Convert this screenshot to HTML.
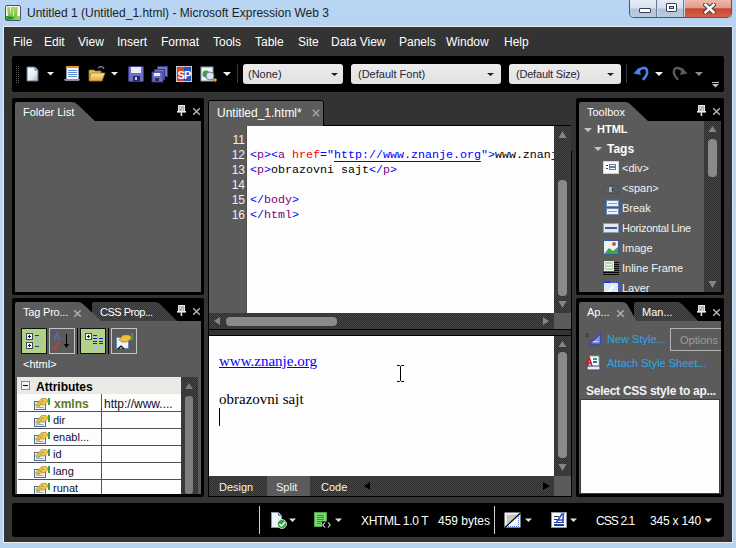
<!DOCTYPE html>
<html><head><meta charset="utf-8">
<style>
*{margin:0;padding:0;box-sizing:border-box}
html,body{width:736px;height:548px;overflow:hidden}
body{position:relative;background:linear-gradient(180deg,#b8d5f3 0px,#b6d4f2 30px,#bcd7f2 300px,#b6d3f0 548px);font-family:"Liberation Sans",sans-serif;font-size:11px;color:#fff}
.a{position:absolute}
.t{position:absolute;white-space:nowrap;line-height:1}
.blk{position:absolute;background:#000}
.gry{position:absolute;background:#5b5b5b}
</style></head><body>

<!-- title bar -->
<svg class="a" style="left:5px;top:5px" width="16" height="16" viewBox="0 0 16 16">
<defs><linearGradient id="ig" x1="0" y1="0" x2="0" y2="1"><stop offset="0" stop-color="#a8d870"/><stop offset="0.7" stop-color="#88c850"/><stop offset="1" stop-color="#60b040"/></linearGradient>
<linearGradient id="ig2" x1="0" y1="0" x2="1" y2="0"><stop offset="0" stop-color="#2a9a30"/><stop offset="0.5" stop-color="#60c040"/><stop offset="1" stop-color="#a0d860"/></linearGradient></defs>
<rect x="0.5" y="0.5" width="15" height="15" rx="1.5" fill="#fdfbe8" stroke="#4d5166"/>
<path d="M2 2h3l1 10h-3z M6 2h3l-1 9h-2z M9 2h4l-1 10h-3z" fill="url(#ig)"/>
<rect x="1" y="11" width="14" height="4" fill="url(#ig2)"/>
<rect x="3" y="12" width="5" height="1.5" fill="#1f7a20"/>
</svg>
<div class="t" style="left:27px;top:7px;font-size:12px;color:#1e1e1e">Untitled 1 (Untitled_1.html) - Microsoft Expression Web 3</div>

<!-- window buttons -->
<div class="a" style="left:629px;top:0;width:103px;height:18px;border:1px solid #505868;border-top:none;border-radius:0 0 5px 5px;overflow:hidden;background:#d0dced">
  <div class="a" style="left:0;top:0;width:27px;height:17px;background:linear-gradient(180deg,#e3ecf7 0,#d5e2f0 48%,#b2c4da 52%,#b9cbe0 100%);border-right:1px solid #6f7d92"></div>
  <div class="a" style="left:28px;top:0;width:26px;height:17px;background:linear-gradient(180deg,#e3ecf7 0,#d5e2f0 48%,#b2c4da 52%,#b9cbe0 100%);border-right:1px solid #6f7d92"></div>
  <div class="a" style="left:55px;top:0;width:47px;height:17px;background:linear-gradient(180deg,#f0b8ac 0,#e39c8c 45%,#c9462c 52%,#d36049 100%)"></div>
  <div class="a" style="left:9px;top:8px;width:12px;height:5px;background:#fff;border:1px solid #3d4250;border-radius:1px"></div>
  <div class="a" style="left:36px;top:3px;width:11px;height:9px;background:#fff;border:1px solid #3d4250;border-radius:1px"><div class="a" style="left:2px;top:2px;width:5px;height:3px;background:#b9cbe0;border:1px solid #3d4250"></div></div>
  <svg class="a" style="left:73px;top:3px" width="13" height="11" viewBox="0 0 13 11"><path d="M2.5 1.8L10.5 9.2M10.5 1.8L2.5 9.2" stroke="#4a3a3a" stroke-width="4.6" stroke-linecap="square"/><path d="M2.5 1.8L10.5 9.2M10.5 1.8L2.5 9.2" stroke="#fff" stroke-width="2.6" stroke-linecap="square"/></svg>
</div>

<!-- client -->
<div class="a" style="left:3px;top:26px;width:730px;height:517px;border:1px solid #e8eef6;border-right-color:#dde6f0"></div>
<div class="a" style="left:4px;top:27px;width:728px;height:515px;background:#333333"></div>

<!-- menu -->
<div class="t" style="left:13px;top:36px;font-size:12px">File</div>
<div class="t" style="left:44px;top:36px;font-size:12px">Edit</div>
<div class="t" style="left:78px;top:36px;font-size:12px">View</div>
<div class="t" style="left:117px;top:36px;font-size:12px">Insert</div>
<div class="t" style="left:161px;top:36px;font-size:12px">Format</div>
<div class="t" style="left:213px;top:36px;font-size:12px">Tools</div>
<div class="t" style="left:255px;top:36px;font-size:12px">Table</div>
<div class="t" style="left:298px;top:36px;font-size:12px">Site</div>
<div class="t" style="left:331px;top:36px;font-size:12px">Data View</div>
<div class="t" style="left:399px;top:36px;font-size:12px">Panels</div>
<div class="t" style="left:446px;top:36px;font-size:12px">Window</div>
<div class="t" style="left:504px;top:36px;font-size:12px">Help</div>

<!-- toolbar -->
<div class="blk" style="left:12px;top:56px;width:712px;height:36px;border-radius:2px"></div>
<svg class="a" style="left:12px;top:56px" width="712" height="36" viewBox="0 0 712 36">
<defs>
<pattern id="grip" width="2" height="2" patternUnits="userSpaceOnUse"><rect x="0" y="0" width="1" height="1" fill="#5a5a5a"/></pattern>
<linearGradient id="pg" x1="0" y1="0" x2="1" y2="1"><stop offset="0" stop-color="#ffffff"/><stop offset="0.6" stop-color="#e4ecf4"/><stop offset="1" stop-color="#9db2c8"/></linearGradient>
<linearGradient id="fold" x1="0" y1="0" x2="0" y2="1"><stop offset="0" stop-color="#f8e6a0"/><stop offset="1" stop-color="#e0a830"/></linearGradient>
<linearGradient id="dd" x1="0" y1="0" x2="0" y2="1"><stop offset="0" stop-color="#ececec"/><stop offset="1" stop-color="#e2e2e2"/></linearGradient>
</defs>
<rect x="4" y="9" width="4" height="18" fill="url(#grip)"/>
<!-- new page -->
<path d="M15 11h8l3 3v11h-11z" fill="url(#pg)" stroke="#5d7390" stroke-width="1"/>
<path d="M23 11v3h3" fill="#c8d8e8" stroke="#5d7390"/>
<path d="M35 16h7l-3.5 3.5z" fill="#f4f4f4"/>
<!-- notepad -->
<rect x="54.5" y="10.5" width="12" height="14" fill="#f6f8fc" stroke="#8a95a8"/>
<rect x="54" y="10" width="13" height="2" fill="#f0902a"/>
<path d="M56 14.5h9M56 16.5h9M56 18.5h9M56 20.5h9" stroke="#5f8ccc" stroke-width="1"/>
<path d="M52 23h16l-1 2h-14z" fill="#8a93a0"/>
<!-- folder -->
<path d="M77 14h5l1 1h6v9h-12z" fill="#e8c060" stroke="#8a7030" stroke-width="0.8"/>
<path d="M79 17h14l-3 8h-13z" fill="url(#fold)" stroke="#a07820" stroke-width="0.8"/>
<path d="M86 12c2-2 5-2 6 1" fill="none" stroke="#7f8fa8" stroke-width="1.2"/>
<path d="M99 16h7l-3.5 3.5z" fill="#f4f4f4"/>
<!-- save -->
<rect x="116.5" y="10.5" width="15" height="15" rx="1" fill="#6b6fc8" stroke="#3a3a80"/>
<rect x="119" y="11" width="10" height="6" fill="#e8ecf8"/>
<rect x="121" y="20" width="7" height="5" fill="#2a2a60"/>
<rect x="123" y="21" width="2" height="3" fill="#c8c8e8"/>
<!-- save all -->
<rect x="145.5" y="10.5" width="10" height="10" fill="#7478c8" stroke="#3a3a80"/>
<rect x="142.5" y="13.5" width="10" height="10" fill="#7478c8" stroke="#3a3a80"/>
<rect x="140" y="16" width="11" height="10" fill="#6b6fc8" stroke="#3a3a80"/>
<rect x="142" y="17" width="6" height="3" fill="#e8ecf8"/>
<rect x="143" y="22" width="4" height="3" fill="#2a2a60"/>
<!-- SP -->
<rect x="164.5" y="10.5" width="15" height="15" fill="#fff" stroke="#c8c8d8"/>
<rect x="165" y="11" width="7" height="14" fill="#e04020"/>
<rect x="172" y="11" width="7" height="14" fill="#2850b8"/>
<text x="165.5" y="23" font-family="Liberation Sans" font-weight="bold" font-size="11" fill="#fff">S</text>
<text x="172" y="23" font-family="Liberation Sans" font-weight="bold" font-size="11" fill="#fff">P</text>
<!-- preview -->
<rect x="189" y="11" width="12" height="14" fill="#eef3f8" stroke="#8898b0"/>
<circle cx="194" cy="18" r="3.5" fill="#3aa040"/>
<circle cx="198" cy="20" r="4" fill="#d8e4f0" stroke="#708090"/>
<circle cx="203" cy="24" r="1.8" fill="#f0a030"/>
<path d="M211 16h8l-4 4z" fill="#f0f0f0"/>
<rect x="225" y="8" width="1" height="19" fill="#3a3a3a"/>
<!-- dropdowns -->
<rect x="231" y="8" width="100" height="20" rx="3" fill="url(#dd)"/>
<path d="M319 17h7l-3.5 3z" fill="#202020"/>
<rect x="339" y="8" width="150" height="20" rx="3" fill="url(#dd)"/>
<path d="M475 17h7l-3.5 3z" fill="#202020"/>
<rect x="497" y="8" width="112" height="20" rx="3" fill="url(#dd)"/>
<path d="M595 17h7l-3.5 3z" fill="#202020"/>
<rect x="614" y="8" width="1" height="19" fill="#3a3a3a"/>
<!-- undo -->
<path d="M626.5 15C628.5 11.5 634 10.5 635 14.5C635.8 18 633.5 21 631.5 23" fill="none" stroke="#4a80ec" stroke-width="2.6" stroke-linecap="round"/>
<path d="M621.5 17.5L627 11.5L629 19z" fill="#4a80ec"/>
<path d="M643 16h8l-4 4z" fill="#f4f4f4"/>
<!-- redo gray -->
<g transform="translate(1297,0) scale(-1,1)">
<path d="M626.5 15C628.5 11.5 634 10.5 635 14.5C635.8 18 633.5 21 631.5 23" fill="none" stroke="#5a5a5a" stroke-width="2.4" stroke-linecap="round"/>
<path d="M621.5 17.5L627 11.5L629 19z" fill="#5a5a5a"/>
</g>
<path d="M683 16h8l-4 4z" fill="#8a8a8a"/>
<rect x="700" y="26" width="7" height="1" fill="#c0c0c0"/>
<path d="M700 28h7l-3.5 3.5z" fill="#c0c0c0"/>
</svg>
<div class="t" style="left:248px;top:69px;font-size:11px;color:#25253a">(None)</div>
<div class="t" style="left:358px;top:69px;font-size:11px;color:#25253a">(Default Font)</div>
<div class="t" style="left:516px;top:69px;font-size:11px;color:#25253a;letter-spacing:-0.2px">(Default Size)</div>

<!-- left top panel -->
<div class="blk" style="left:12px;top:98px;width:192px;height:197px;border-radius:2px"></div>
<svg class="a" style="left:12px;top:98px" width="192" height="24" viewBox="0 0 192 24"><path d="M3 24V6Q3 4 5 4H60Q63 4 65 6L84 24Z" fill="#5b5b5b"/></svg>
<div class="gry" style="left:15px;top:121px;width:186px;height:171px"></div>
<div class="t" style="left:23px;top:107px">Folder List</div>
<svg class="a" style="left:177px;top:105px" width="10" height="11" viewBox="0 0 10 11"><rect x="1.5" y="0.5" width="6" height="6" fill="#b4b4b4" stroke="#e8e8e8"/><rect x="3" y="2" width="1" height="1" fill="#f0f0f0"/><rect x="5" y="4" width="1" height="1" fill="#f0f0f0"/><rect x="0" y="6" width="9" height="1.6" fill="#f0f0f0"/><rect x="3.6" y="7" width="1.6" height="4" fill="#d8d8d8"/></svg>
<svg class="a" style="left:192px;top:107px" width="9" height="9" viewBox="0 0 9 9"><path d="M1.2 1.2L7.8 7.8M7.8 1.2L1.2 7.8" stroke="#b0b0b0" stroke-width="1.5"/></svg>

<!-- left bottom panel -->
<div class="blk" style="left:12px;top:298px;width:192px;height:199px;border-radius:2px"></div>
<svg class="a" style="left:12px;top:298px" width="192" height="24" viewBox="0 0 192 24">
<defs><pattern id="dth1" width="2" height="2" patternUnits="userSpaceOnUse"><rect width="2" height="2" fill="#343434"/><rect width="1" height="1" fill="#484848"/><rect x="1" y="1" width="1" height="1" fill="#484848"/></pattern></defs><path d="M80 24V6Q80 4 82 4H143Q146 4 148 6L166 24Z" fill="url(#dth1)"/>
<path d="M3 24V6Q3 4 5 4H66Q69 4 71 6L90 24Z" fill="#5b5b5b"/></svg>
<div class="gry" style="left:15px;top:321px;width:186px;height:173px"></div>
<div class="t" style="left:23px;top:307px;letter-spacing:-0.2px">Tag Pro...</div>
<svg class="a" style="left:73px;top:309px" width="9" height="9" viewBox="0 0 9 9"><path d="M1.2 1.2L7.8 7.8M7.8 1.2L1.2 7.8" stroke="#b0b0b0" stroke-width="1.5"/></svg>
<div class="t" style="left:100px;top:307px;letter-spacing:-0.5px">CSS Prop...</div>
<svg class="a" style="left:177px;top:305px" width="10" height="11" viewBox="0 0 10 11"><rect x="1.5" y="0.5" width="6" height="6" fill="#b4b4b4" stroke="#e8e8e8"/><rect x="3" y="2" width="1" height="1" fill="#f0f0f0"/><rect x="5" y="4" width="1" height="1" fill="#f0f0f0"/><rect x="0" y="6" width="9" height="1.6" fill="#f0f0f0"/><rect x="3.6" y="7" width="1.6" height="4" fill="#d8d8d8"/></svg>
<svg class="a" style="left:192px;top:307px" width="9" height="9" viewBox="0 0 9 9"><path d="M1.2 1.2L7.8 7.8M7.8 1.2L1.2 7.8" stroke="#b0b0b0" stroke-width="1.5"/></svg>

<!-- tag props content -->
<div class="a" style="left:21px;top:328px;width:26px;height:26px;background:#b2d387;border:1px solid #101010"></div>
<svg class="a" style="left:21px;top:328px" width="26" height="26" viewBox="0 0 26 26">
<rect x="5.5" y="5.5" width="6" height="6" fill="#f4f6fa" stroke="#404a60"/><path d="M7 8.5h3M8.5 7v3" stroke="#101830"/>
<rect x="5.5" y="14.5" width="6" height="6" fill="#f4f6fa" stroke="#404a60"/><path d="M7 17.5h3M8.5 16v3" stroke="#101830"/>
<rect x="14" y="7" width="4" height="1" fill="#304060"/><rect x="14" y="18" width="4" height="1" fill="#304060"/>
<rect x="14" y="8" width="4" height="10" fill="#a8c8a8"/><path d="M19 9.5h3M19 11.5h3M19 13.5h3M19 15.5h3M19 19.5h3" stroke="#a0b8e0"/>
</svg>
<div class="a" style="left:49px;top:328px;width:26px;height:26px;border:1px solid #c4c4c4"></div>
<svg class="a" style="left:49px;top:328px" width="26" height="26" viewBox="0 0 26 26">
<path d="M5 12l3-7 3 7M6 10h4" fill="none" stroke="#4a70c8" stroke-width="1.2"/>
<path d="M5 15h5l-5 6h5" fill="none" stroke="#c84030" stroke-width="1.2"/>
<path d="M17.5 6v12" stroke="#000" stroke-width="1"/><path d="M15 16l2.5 4 2.5-4z" fill="#000"/>
</svg>
<div class="a" style="left:77px;top:328px;width:1px;height:26px;background:#000"></div>
<div class="a" style="left:80px;top:328px;width:26px;height:26px;background:#b2d387;border:1px solid #101010"></div>
<svg class="a" style="left:80px;top:328px" width="26" height="26" viewBox="0 0 26 26">
<rect x="5.5" y="5.5" width="6" height="6" fill="#f4f6fa" stroke="#404a60"/><path d="M7 8.5h3M8.5 7v3" stroke="#101830"/>
<path d="M13 7.5h4M13 10.5h4M19 10.5h4M13 13.5h4M19 13.5h4M13 15.5h4M19 15.5h4" stroke="#1020e0"/>
<path d="M13 18.5h4M19 18.5h4M13 20.5h4" stroke="#a8c0e0"/>
</svg>
<div class="a" style="left:108px;top:328px;width:1px;height:26px;background:#000"></div>
<div class="a" style="left:111px;top:328px;width:26px;height:26px;border:1px solid #c4c4c4"></div>
<svg class="a" style="left:111px;top:328px" width="26" height="26" viewBox="0 0 26 26">
<rect x="5.5" y="9.5" width="12" height="11" fill="#f0f4fa" stroke="#6a88b0"/>
<path d="M7 21l3-3 3 3" fill="none" stroke="#000" stroke-width="1.2"/>
<path d="M8 12l4-5h6l2 2v2l-4 3h-5z" fill="#f2c040" stroke="#8a6a20" stroke-width="0.6"/>
<rect x="20" y="5" width="2" height="7" fill="#3aa040"/>
</svg>
<div class="t" style="left:23px;top:359px;font-size:11px">&lt;html&gt;</div>
<!-- table -->
<div class="a" style="left:15px;top:375px;width:186px;height:119px;background:#5b5b5b"></div>
<div class="a" style="left:17px;top:377px;width:164px;height:117px;background:#fdfdfd"></div>
<div class="a" style="left:17px;top:377px;width:164px;height:17px;background:#e9e9e6"></div>
<div class="a" style="left:21px;top:381px;width:9px;height:9px;border:1px solid #8a8a8a;background:#f4f4f4"></div>
<div class="a" style="left:23px;top:385px;width:5px;height:1px;background:#000"></div>
<div class="t" style="left:36px;top:381px;font-size:12px;font-weight:bold;color:#000">Attributes</div>
<div class="a" style="left:101px;top:394px;width:1px;height:100px;background:#505050"></div>
<div class="a" style="left:0;top:0;width:736px;height:494px;overflow:hidden"><svg class="a" style="left:33px;top:397px" width="18" height="14" viewBox="0 0 18 14"><rect x="1.5" y="4.5" width="11" height="8" fill="#f2f6fb" stroke="#4a6a9a"/><path d="M3 10.5h1.5M5.5 10.5h5" stroke="#8aa0c0"/><path d="M2.5 8L8.5 1.5H13Q15 2 14.5 5L11.5 8H7.5L5 10.5Z" fill="#f0c848" stroke="#9a7a30" stroke-width="0.6"/><path d="M4 8.5l1-1M6 6.5l1-1M8 4.5l1-1M5.5 9l1-1M7.5 7l1-1M9.5 5l1-1" stroke="#6a5a30" stroke-width="0.7"/><rect x="15" y="1" width="2" height="7" fill="#3aa040"/></svg><div class="t" style="left:54px;top:398px;font-size:12px;font-weight:bold;color:#5b7a23">xmlns</div><div class="t" style="left:104px;top:398px;font-size:12px;color:#101030">http://www....</div><div class="a" style="left:18px;top:411px;width:163px;height:1px;background:#505050"></div><svg class="a" style="left:33px;top:414px" width="18" height="14" viewBox="0 0 18 14"><rect x="1.5" y="4.5" width="11" height="8" fill="#f2f6fb" stroke="#4a6a9a"/><path d="M3 10.5h1.5M5.5 10.5h5" stroke="#8aa0c0"/><path d="M2.5 8L8.5 1.5H13Q15 2 14.5 5L11.5 8H7.5L5 10.5Z" fill="#f0c848" stroke="#9a7a30" stroke-width="0.6"/><path d="M4 8.5l1-1M6 6.5l1-1M8 4.5l1-1M5.5 9l1-1M7.5 7l1-1M9.5 5l1-1" stroke="#6a5a30" stroke-width="0.7"/><rect x="15" y="1" width="2" height="7" fill="#3aa040"/></svg><div class="t" style="left:53px;top:415px;font-size:11px;color:#101030">dir</div><div class="a" style="left:18px;top:428px;width:163px;height:1px;background:#505050"></div><svg class="a" style="left:33px;top:431px" width="18" height="14" viewBox="0 0 18 14"><rect x="1.5" y="4.5" width="11" height="8" fill="#f2f6fb" stroke="#4a6a9a"/><path d="M3 10.5h1.5M5.5 10.5h5" stroke="#8aa0c0"/><path d="M2.5 8L8.5 1.5H13Q15 2 14.5 5L11.5 8H7.5L5 10.5Z" fill="#f0c848" stroke="#9a7a30" stroke-width="0.6"/><path d="M4 8.5l1-1M6 6.5l1-1M8 4.5l1-1M5.5 9l1-1M7.5 7l1-1M9.5 5l1-1" stroke="#6a5a30" stroke-width="0.7"/><rect x="15" y="1" width="2" height="7" fill="#3aa040"/></svg><div class="t" style="left:53px;top:432px;font-size:11px;color:#101030">enabl...</div><div class="a" style="left:18px;top:445px;width:163px;height:1px;background:#505050"></div><svg class="a" style="left:33px;top:448px" width="18" height="14" viewBox="0 0 18 14"><rect x="1.5" y="4.5" width="11" height="8" fill="#f2f6fb" stroke="#4a6a9a"/><path d="M3 10.5h1.5M5.5 10.5h5" stroke="#8aa0c0"/><path d="M2.5 8L8.5 1.5H13Q15 2 14.5 5L11.5 8H7.5L5 10.5Z" fill="#f0c848" stroke="#9a7a30" stroke-width="0.6"/><path d="M4 8.5l1-1M6 6.5l1-1M8 4.5l1-1M5.5 9l1-1M7.5 7l1-1M9.5 5l1-1" stroke="#6a5a30" stroke-width="0.7"/><rect x="15" y="1" width="2" height="7" fill="#3aa040"/></svg><div class="t" style="left:53px;top:449px;font-size:11px;color:#101030">id</div><div class="a" style="left:18px;top:462px;width:163px;height:1px;background:#505050"></div><svg class="a" style="left:33px;top:465px" width="18" height="14" viewBox="0 0 18 14"><rect x="1.5" y="4.5" width="11" height="8" fill="#f2f6fb" stroke="#4a6a9a"/><path d="M3 10.5h1.5M5.5 10.5h5" stroke="#8aa0c0"/><path d="M2.5 8L8.5 1.5H13Q15 2 14.5 5L11.5 8H7.5L5 10.5Z" fill="#f0c848" stroke="#9a7a30" stroke-width="0.6"/><path d="M4 8.5l1-1M6 6.5l1-1M8 4.5l1-1M5.5 9l1-1M7.5 7l1-1M9.5 5l1-1" stroke="#6a5a30" stroke-width="0.7"/><rect x="15" y="1" width="2" height="7" fill="#3aa040"/></svg><div class="t" style="left:53px;top:466px;font-size:11px;color:#101030">lang</div><div class="a" style="left:18px;top:479px;width:163px;height:1px;background:#505050"></div><svg class="a" style="left:33px;top:482px" width="18" height="14" viewBox="0 0 18 14"><rect x="1.5" y="4.5" width="11" height="8" fill="#f2f6fb" stroke="#4a6a9a"/><path d="M3 10.5h1.5M5.5 10.5h5" stroke="#8aa0c0"/><path d="M2.5 8L8.5 1.5H13Q15 2 14.5 5L11.5 8H7.5L5 10.5Z" fill="#f0c848" stroke="#9a7a30" stroke-width="0.6"/><path d="M4 8.5l1-1M6 6.5l1-1M8 4.5l1-1M5.5 9l1-1M7.5 7l1-1M9.5 5l1-1" stroke="#6a5a30" stroke-width="0.7"/><rect x="15" y="1" width="2" height="7" fill="#3aa040"/></svg><div class="t" style="left:53px;top:483px;font-size:11px;color:#101030">runat</div></div>
<div class="a" style="left:181px;top:377px;width:17px;height:117px;background:repeating-conic-gradient(#303030 0 25%,#434343 0 50%) 0 0/2px 2px"></div>
<svg class="a" style="left:181px;top:377px" width="17" height="117" viewBox="0 0 17 117"><path d="M4 12h8l-4-6z" fill="#7a7a7a"/><rect x="4" y="19" width="8" height="98" rx="3" fill="#7e7e7e"/></svg>

<!-- center -->
<svg class="a" style="left:208px;top:100px" width="116" height="26" viewBox="0 0 116 26"><path d="M0.5 26V2.5Q0.5 0.5 2.5 0.5H113.5Q115.5 0.5 115.5 2.5V26" fill="#5b5b5b" stroke="#000"/></svg>
<div class="t" style="left:217px;top:107px;font-size:12px">Untitled_1.html*</div>
<svg class="a" style="left:312px;top:109px" width="8" height="8" viewBox="0 0 8 8"><path d="M0.8 0.8L7.2 7.2M7.2 0.8L0.8 7.2" stroke="#a8a8a8" stroke-width="1.3"/></svg>
<div class="blk" style="left:323px;top:125px;width:248px;height:1px"></div>
<div class="blk" style="left:208px;top:125px;width:1px;height:372px"></div>
<div class="blk" style="left:571px;top:151px;width:1px;height:346px"></div>
<div class="blk" style="left:208px;top:496px;width:364px;height:1px"></div>
<!-- gutter + code -->
<div class="gry" style="left:209px;top:126px;width:38px;height:187px"></div>
<div class="a" style="left:246px;top:126px;width:1px;height:187px;background:#4e4e4e"></div>
<div class="a" style="left:247px;top:126px;width:307px;height:187px;background:#fefefe;overflow:hidden">
<pre style="position:absolute;left:3px;top:7px;font-family:'Liberation Mono',monospace;font-size:11.67px;line-height:15px;color:#000">

<span style="color:#0000ff">&lt;</span><span style="color:#800080">p</span><span style="color:#0000ff">&gt;&lt;</span><span style="color:#800080">a</span> <span style="color:#ff0000">href</span><span style="color:#0000ff">="<u style="text-underline-offset:2.5px">http://www.znanje.org</u>"&gt;</span>www.znanje.org<span style="color:#0000ff">&lt;/</span><span style="color:#800080">a</span><span style="color:#0000ff">&gt;</span>
<span style="color:#0000ff">&lt;</span><span style="color:#800080">p</span><span style="color:#0000ff">&gt;</span>obrazovni sajt<span style="color:#0000ff">&lt;/</span><span style="color:#800080">p</span><span style="color:#0000ff">&gt;</span>

<span style="color:#0000ff">&lt;/</span><span style="color:#800080">body</span><span style="color:#0000ff">&gt;</span>
<span style="color:#0000ff">&lt;/</span><span style="color:#800080">html</span><span style="color:#0000ff">&gt;</span></pre>
</div>
<div class="t" style="left:226px;top:133px;font-size:12px;line-height:15px;text-align:right;width:19px;white-space:pre;color:#f0f0f0">11
12
13
14
15
16</div>
<!-- code v scroll -->
<div class="a" style="left:554px;top:126px;width:17px;height:187px;background:repeating-conic-gradient(#303030 0 25%,#434343 0 50%) 0 0/2px 2px"></div>
<svg class="a" style="left:554px;top:126px" width="17" height="187" viewBox="0 0 17 187"><path d="M4.5 12h8l-4-7z" fill="#858585"/><rect x="4" y="54" width="9" height="116" rx="4" fill="#8a8a8a"/><path d="M4.5 175h8l-4 7z" fill="#858585"/></svg>
<!-- code h scroll -->
<div class="a" style="left:209px;top:313px;width:345px;height:16px;background:repeating-conic-gradient(#303030 0 25%,#434343 0 50%) 0 0/2px 2px"></div>
<svg class="a" style="left:209px;top:313px" width="345" height="16" viewBox="0 0 345 16"><path d="M11 4v8l-6-4z" fill="#858585"/><rect x="17" y="4" width="111" height="9" rx="4" fill="#8a8a8a"/><path d="M334 4v8l6-4z" fill="#858585"/></svg>
<div class="gry" style="left:554px;top:313px;width:17px;height:16px"></div>
<div class="blk" style="left:209px;top:329px;width:362px;height:1px"></div>
<div class="a" style="left:209px;top:330px;width:362px;height:5px;background:#333"></div>
<div class="blk" style="left:209px;top:335px;width:362px;height:1px"></div>
<!-- design view -->
<div class="a" style="left:209px;top:336px;width:345px;height:140px;background:#fefefe"></div>
<div class="t" style="left:219px;top:354px;font-family:'Liberation Serif',serif;font-size:15px;color:#0000ff;text-decoration:underline">www.znanje.org</div>
<div class="t" style="left:219px;top:392px;font-family:'Liberation Serif',serif;font-size:15px;color:#000">obrazovni sajt</div>
<div class="blk" style="left:219px;top:408px;width:1px;height:18px"></div>
<svg class="a" style="left:396px;top:365px" width="9" height="17" viewBox="0 0 9 17"><path d="M1 0.5h2.5l1 1 1-1H8M4.5 1.5v14M1 16.5h2.5l1-1 1 1H8" fill="none" stroke="#000" stroke-width="1"/></svg>
<div class="a" style="left:554px;top:336px;width:17px;height:140px;background:repeating-conic-gradient(#303030 0 25%,#434343 0 50%) 0 0/2px 2px"></div>
<svg class="a" style="left:554px;top:336px" width="17" height="140" viewBox="0 0 17 140"><path d="M4.5 11h8l-4-6z" fill="#858585"/><rect x="4" y="16" width="9" height="106" rx="4" fill="#8a8a8a"/><path d="M4.5 128h8l-4 7z" fill="#858585"/></svg>
<!-- bottom tabs -->
<div class="a" style="left:209px;top:476px;width:345px;height:20px;background:repeating-conic-gradient(#303030 0 25%,#434343 0 50%) 0 0/2px 2px"></div>
<div class="gry" style="left:267px;top:476px;width:43px;height:20px"></div>
<div class="t" style="left:219px;top:482px;font-size:11px;color:#f4f4f4">Design</div>
<div class="t" style="left:276px;top:482px;font-size:11px;color:#f4f4f4">Split</div>
<div class="t" style="left:321px;top:482px;font-size:11px;color:#f4f4f4">Code</div>
<svg class="a" style="left:360px;top:480px" width="14" height="12" viewBox="0 0 14 12"><path d="M10 2v8l-6-4z" fill="#000"/></svg>
<svg class="a" style="left:540px;top:480px" width="14" height="12" viewBox="0 0 14 12"><path d="M3 2v8l7-4z" fill="#000"/></svg>
<div class="gry" style="left:554px;top:476px;width:17px;height:20px"></div>

<!-- right top panel -->
<div class="blk" style="left:576px;top:98px;width:148px;height:197px;border-radius:2px"></div>
<svg class="a" style="left:576px;top:98px" width="148" height="24" viewBox="0 0 148 24"><path d="M3 24V6Q3 4 5 4H49Q52 4 54 6L73 24Z" fill="#5b5b5b"/></svg>
<div class="gry" style="left:579px;top:121px;width:142px;height:171px;overflow:hidden">
</div>
<div class="t" style="left:587px;top:107px">Toolbox</div>
<svg class="a" style="left:697px;top:105px" width="10" height="11" viewBox="0 0 10 11"><rect x="1.5" y="0.5" width="6" height="6" fill="#b4b4b4" stroke="#e8e8e8"/><rect x="3" y="2" width="1" height="1" fill="#f0f0f0"/><rect x="5" y="4" width="1" height="1" fill="#f0f0f0"/><rect x="0" y="6" width="9" height="1.6" fill="#f0f0f0"/><rect x="3.6" y="7" width="1.6" height="4" fill="#d8d8d8"/></svg>
<svg class="a" style="left:712px;top:107px" width="9" height="9" viewBox="0 0 9 9"><path d="M1.2 1.2L7.8 7.8M7.8 1.2L1.2 7.8" stroke="#b0b0b0" stroke-width="1.5"/></svg>
<div class="a" style="left:579px;top:121px;width:125px;height:171px;overflow:hidden">
<svg class="a" style="left:5px;top:7px" width="8" height="5" viewBox="0 0 8 5"><path d="M0 0h8L4 4z" fill="#c4c4c4"/></svg>
<div class="t" style="left:18px;top:3px;font-size:11px;font-weight:bold">HTML</div>
<svg class="a" style="left:15px;top:26px" width="8" height="5" viewBox="0 0 8 5"><path d="M0 0h8L4 4z" fill="#c4c4c4"/></svg>
<div class="t" style="left:28px;top:22px;font-size:12px;font-weight:bold">Tags</div>
</div>
<div class="a" style="left:579px;top:121px;width:125px;height:171px;overflow:hidden"><div class="a" style="left:-579px;top:-121px;width:736px;height:548px">
<svg class="a" style="left:603px;top:161px" width="17" height="16" viewBox="0 0 17 16"><rect x="0.5" y="0.5" width="15" height="12" fill="#f8f8f8" stroke="#ffffff" stroke-dasharray="1 1"/><rect x="2" y="2" width="12" height="9" fill="#fff"/><path d="M3 4.5h2M3 7.5h2" stroke="#304060"/><rect x="6.5" y="3.5" width="6" height="2" fill="#fff" stroke="#5a80a8"/><rect x="6.5" y="6.5" width="6" height="2" fill="#fff" stroke="#5a80a8"/></svg><div class="t" style="left:622px;top:163px;font-size:11px;color:#f2f2f2">&lt;div&gt;</div><svg class="a" style="left:603px;top:181px" width="17" height="16" viewBox="0 0 17 16"><rect x="0.5" y="4.5" width="15" height="8" fill="none" stroke="#34507a" stroke-dasharray="2 1"/><rect x="6" y="6" width="3" height="5" fill="#a8b0c0"/><rect x="9" y="8" width="1" height="1" fill="#000"/></svg><div class="t" style="left:622px;top:183px;font-size:11px;color:#f2f2f2">&lt;span&gt;</div><svg class="a" style="left:603px;top:200px" width="17" height="16" viewBox="0 0 17 16"><rect x="3.5" y="0.5" width="12" height="6" fill="#eef4fa" stroke="#6a88b8"/><rect x="3.5" y="8.5" width="12" height="6" fill="#eef4fa" stroke="#6a88b8"/><path d="M5 3.5h9M5 11.5h9" stroke="#8aa0c8"/><path d="M0 5l3 3-3 3" fill="none" stroke="#3060d0"/></svg><div class="t" style="left:622px;top:203px;font-size:11px;color:#f2f2f2">Break</div><svg class="a" style="left:603px;top:220px" width="17" height="16" viewBox="0 0 17 16"><rect x="0.5" y="3.5" width="15" height="9" fill="#e0e8f0" stroke="#8a9ab0"/><rect x="2" y="7" width="12" height="2" fill="#405a90"/></svg><div class="t" style="left:622px;top:223px;font-size:11px;color:#f2f2f2;letter-spacing:-0.3px">Horizontal Line</div><svg class="a" style="left:603px;top:240px" width="17" height="16" viewBox="0 0 17 16"><rect x="0.5" y="0.5" width="15" height="14" fill="#e8f0f8" stroke="#3a5a90"/><path d="M1 14l5-6 4 3 5-4v7z" fill="#4aa040"/><circle cx="11" cy="4" r="2" fill="#e05030"/></svg><div class="t" style="left:622px;top:243px;font-size:11px;color:#f2f2f2">Image</div><svg class="a" style="left:603px;top:260px" width="17" height="16" viewBox="0 0 17 16"><path d="M11 2.5h5M11 4.5h5M11 6.5h5M11 8.5h5M11 10.5h5M0 12.5h16M0 14.5h16" stroke="#0a0a0a"/><rect x="1.5" y="1.5" width="9" height="9" fill="#b8d8b0" stroke="#e8f0e8"/><path d="M3 4.5h6M3 7.5h6" stroke="#f0f8f0"/></svg><div class="t" style="left:622px;top:263px;font-size:11px;color:#f2f2f2">Inline Frame</div><svg class="a" style="left:603px;top:280px" width="17" height="16" viewBox="0 0 17 16"><rect x="0.5" y="2.5" width="15" height="13" fill="#dce8f8" stroke="#1838e8" stroke-dasharray="2 1"/><rect x="1" y="1" width="6" height="2" fill="#1838e8"/><path d="M5 12l6-6" stroke="#fff" stroke-width="2"/></svg><div class="t" style="left:622px;top:283px;font-size:11px;color:#f2f2f2">Layer</div>
</div></div>
<div class="a" style="left:704px;top:121px;width:17px;height:171px;background:repeating-conic-gradient(#303030 0 25%,#434343 0 50%) 0 0/2px 2px"></div>
<svg class="a" style="left:704px;top:121px" width="17" height="171" viewBox="0 0 17 171"><path d="M4.5 11h8l-4-6z" fill="#858585"/><rect x="4" y="18" width="9" height="38" rx="4" fill="#8a8a8a"/><path d="M4.5 160h8l-4 7z" fill="#858585"/></svg>

<!-- right bottom panel -->
<div class="blk" style="left:576px;top:298px;width:148px;height:199px;border-radius:2px"></div>
<svg class="a" style="left:576px;top:298px" width="148" height="24" viewBox="0 0 148 24">
<defs><pattern id="dth2" width="2" height="2" patternUnits="userSpaceOnUse"><rect width="2" height="2" fill="#343434"/><rect width="1" height="1" fill="#484848"/><rect x="1" y="1" width="1" height="1" fill="#484848"/></pattern></defs><path d="M58 24V6Q58 4 60 4H101Q104 4 106 6L123 24Z" fill="url(#dth2)"/>
<path d="M3 24V6Q3 4 5 4H46Q49 4 51 6L61 24Z" fill="#5b5b5b"/></svg>
<div class="gry" style="left:579px;top:321px;width:142px;height:173px"></div>
<div class="t" style="left:587px;top:307px">Ap...</div>
<svg class="a" style="left:616px;top:309px" width="9" height="9" viewBox="0 0 9 9"><path d="M1.2 1.2L7.8 7.8M7.8 1.2L1.2 7.8" stroke="#b0b0b0" stroke-width="1.5"/></svg>
<div class="t" style="left:642px;top:307px">Man...</div>
<svg class="a" style="left:697px;top:305px" width="10" height="11" viewBox="0 0 10 11"><rect x="1.5" y="0.5" width="6" height="6" fill="#b4b4b4" stroke="#e8e8e8"/><rect x="3" y="2" width="1" height="1" fill="#f0f0f0"/><rect x="5" y="4" width="1" height="1" fill="#f0f0f0"/><rect x="0" y="6" width="9" height="1.6" fill="#f0f0f0"/><rect x="3.6" y="7" width="1.6" height="4" fill="#d8d8d8"/></svg>
<svg class="a" style="left:712px;top:308px" width="9" height="9" viewBox="0 0 9 9"><path d="M1.2 1.2L7.8 7.8M7.8 1.2L1.2 7.8" stroke="#b0b0b0" stroke-width="1.5"/></svg>
<svg class="a" style="left:585px;top:331px" width="18" height="16" viewBox="0 0 18 16"><text x="0" y="6" font-family="Liberation Sans" font-size="7" fill="#303030">a</text><path d="M4.5 13L15.5 2.5V13z" fill="#8090d8" stroke="#3848b8" stroke-width="1.2"/><path d="M8 10.5h5" stroke="#d0d8f0"/><path d="M3 14.5h13" stroke="#3848b8"/></svg>
<div class="t" style="left:607px;top:334px;font-size:11px;color:#22aaf2">New Style...</div>
<div class="a" style="left:670px;top:328px;width:51px;height:23px;border:1px solid #b4b4b4;border-right:none"></div>
<div class="t" style="left:680px;top:335px;font-size:11px;color:#9c9c9c">Options</div>
<svg class="a" style="left:585px;top:355px" width="17" height="16" viewBox="0 0 17 16"><rect x="4" y="1" width="10" height="12" fill="#fff" stroke="#8898b0"/><path d="M1 11l3-9 3 9M2.5 8h3" fill="none" stroke="#c02020" stroke-width="1.6"/><rect x="8" y="3" width="4" height="2" fill="#3aa040"/><rect x="8" y="6" width="4" height="2" fill="#3060c0"/><rect x="2" y="11" width="13" height="4" rx="1" fill="#e0e8f4" stroke="#3a4a70"/></svg>
<div class="t" style="left:607px;top:358px;font-size:11px;color:#22aaf2">Attach Style Sheet...</div>
<div class="t" style="left:586px;top:385px;font-size:12px;font-weight:bold;color:#f4f4f4;letter-spacing:-0.25px">Select CSS style to ap...</div>
<div class="a" style="left:580px;top:399px;width:140px;height:95px;background:#fdfdfd;border:1px solid #404040"></div>

<!-- status bar -->
<div class="blk" style="left:12px;top:503px;width:712px;height:34px;border-radius:2px"></div>
<div class="a" style="left:259px;top:506px;width:1px;height:28px;background:#d0d0d0"></div>
<div class="a" style="left:494px;top:506px;width:1px;height:28px;background:#d0d0d0"></div>
<svg class="a" style="left:271px;top:512px" width="17" height="17" viewBox="0 0 17 17"><path d="M0.5 0.5h7l3 3v12h-10z" fill="#f0f4f8" stroke="#8898b0"/><path d="M7.5 0.5v3h3" fill="#c0d0e0" stroke="#6a7a90"/><circle cx="11" cy="12" r="4.5" fill="#30a040" stroke="#e0f0e0" stroke-width="0.8"/><path d="M8.5 12l2 2 3.5-4" fill="none" stroke="#fff" stroke-width="1.5"/></svg>
<svg class="a" style="left:289px;top:518px" width="8" height="5" viewBox="0 0 8 5"><path d="M0 0.5h7L3.5 4z" fill="#e0e0e0"/></svg>
<svg class="a" style="left:314px;top:512px" width="19" height="17" viewBox="0 0 19 17"><rect x="0.5" y="0.5" width="12" height="14" fill="#7ad870" stroke="#50a048"/><path d="M3 3.5h7M3 5.5h7M3 7.5h7M3 9.5h7M3 11.5h4" stroke="#3a8a3a"/><rect x="8" y="9.5" width="10" height="7" fill="#000"/><path d="M11 10.5L8.8 13L11 15.5M14 10.5L16.2 13L14 15.5" fill="none" stroke="#d8e8f0" stroke-width="1.1"/></svg>
<svg class="a" style="left:335px;top:518px" width="8" height="5" viewBox="0 0 8 5"><path d="M0 0.5h7L3.5 4z" fill="#e0e0e0"/></svg>
<div class="t" style="left:361px;top:515px;font-size:12px;letter-spacing:-0.3px">XHTML 1.0 T</div>
<div class="t" style="left:438px;top:515px;font-size:12px">459 bytes</div>
<svg class="a" style="left:504px;top:512px" width="18" height="17" viewBox="0 0 18 17"><rect x="0.5" y="0.5" width="16" height="15" fill="#f4f4f4"/><path d="M2 2h13L2 14z" fill="#c8c8c8"/><path d="M2.5 2.5h11M2.5 2.5v11" stroke="#fff" stroke-dasharray="1 1"/><path d="M14.5 4v10.5H4" fill="none" stroke="#4a78e0" stroke-dasharray="1 1"/><path d="M1 15.5L16.5 1" stroke="#000" stroke-width="1.2"/></svg>
<svg class="a" style="left:525px;top:518px" width="8" height="5" viewBox="0 0 8 5"><path d="M0 0.5h7L3.5 4z" fill="#e0e0e0"/></svg>
<svg class="a" style="left:551px;top:512px" width="17" height="17" viewBox="0 0 17 17"><rect x="0.5" y="0.5" width="15" height="15" fill="#fff" stroke="#9098a8"/><path d="M3 4.5h5M3 7.5h4M3 10.5h10M3 13.5h10" stroke="#303848"/><path d="M3 12.5h10" stroke="#2040c0" stroke-width="1"/><path d="M5 11L11 2h1.5l-1 9M7 8h6" fill="none" stroke="#2850d0" stroke-width="1.6"/></svg>
<svg class="a" style="left:570px;top:518px" width="8" height="5" viewBox="0 0 8 5"><path d="M0 0.5h7L3.5 4z" fill="#e0e0e0"/></svg>
<div class="t" style="left:596px;top:515px;font-size:12px;letter-spacing:-0.9px">CSS 2.1</div>
<div class="t" style="left:650px;top:515px;font-size:12px;letter-spacing:-0.2px">345 x 140</div>
<svg class="a" style="left:704px;top:518px" width="9" height="5" viewBox="0 0 9 5"><path d="M0.5 0.5h7.5L4.25 4.5z" fill="#e0e0e0"/></svg>

</body></html>
